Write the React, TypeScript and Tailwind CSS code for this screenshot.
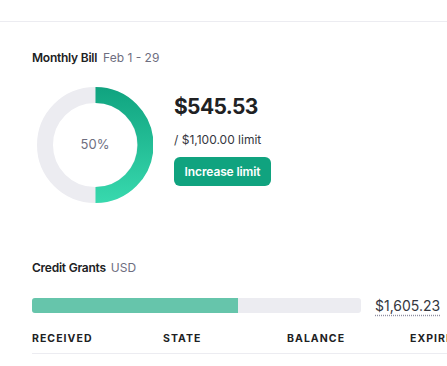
import React from "react";

const Donut = () => {
  return (
    <svg width="116" height="116" viewBox="0 0 116 116">
      <defs>
        <linearGradient id="g" x1="0" y1="0" x2="0" y2="116" gradientUnits="userSpaceOnUse">
          <stop offset="0" stopColor="#10a37f" />
          <stop offset="1" stopColor="#38d9ae" />
        </linearGradient>
      </defs>
      <circle cx="58" cy="58" r="50" fill="none" stroke="#ececf1" strokeWidth="16" />
      <path d="M58.5 8 A50 50 0 0 1 58.5 108" fill="none" stroke="url(#g)" strokeWidth="16" />
    </svg>
  );
};

export default function App() {
  return (
    <div className="w-[447px] h-[366px] overflow-hidden bg-white text-[#353740] font-['Inter',sans-serif]">
      <div className="h-[22px] border-b border-[#ececf1]"></div>
      <div className="w-[520px] pl-8 pt-[27px]">
        <div className="flex items-baseline gap-[6px] text-[12px]">
          <span className="font-semibold text-[#202123] tracking-[-0.02em]">Monthly Bill</span>
          <span className="text-[#6e6e80]">Feb 1 - 29</span>
        </div>

        <div className="flex items-center mt-[20px] ml-[5px]">
          <div className="relative w-[116px] h-[116px]">
            <Donut />
            <div className="absolute inset-0 flex items-center justify-center text-[13px] text-[#6e6e80]">
              50%
            </div>
          </div>
          <div className="ml-[21px] flex flex-col self-start mt-[6px]">
            <div className="text-[21px] font-bold text-[#202123] leading-[28px] tracking-[-0.03em]">$545.53</div>
            <div className="text-[12px] mt-[11px] leading-[16px]">/ $1,100.00 limit</div>
            <button className="mt-[9px] w-[97px] h-[29px] rounded-[6px] bg-[#10a37f] text-white text-[12px] font-semibold tracking-[-0.01em]">
              Increase limit
            </button>
          </div>
        </div>

        <div className="flex items-baseline gap-[5px] text-[12px] mt-[56px]">
          <span className="font-semibold text-[#202123] tracking-[-0.02em]">Credit Grants</span>
          <span className="text-[#6e6e80]">USD</span>
        </div>

        <div className="flex items-center mt-[18px]">
          <div className="w-[329px] h-[15px] rounded-[3px] bg-[#ececf1] overflow-hidden">
            <div className="h-full w-[206px] bg-[#66c5ab]"></div>
          </div>
          <span className="ml-[14px] text-[14px] text-[#353740] underline decoration-dotted decoration-[#8e8ea0] underline-offset-[4px]">
            $1,605.23
          </span>
        </div>

        <div className="grid grid-cols-[131px_124px_123px_1fr] mt-[15px] pb-[6px] border-b border-[#ececf1] text-[10.5px] font-bold tracking-[0.1em] text-[#202123]">
          <div>RECEIVED</div>
          <div>STATE</div>
          <div>BALANCE</div>
          <div>EXPIRES</div>
        </div>
      </div>
    </div>
  );
}
